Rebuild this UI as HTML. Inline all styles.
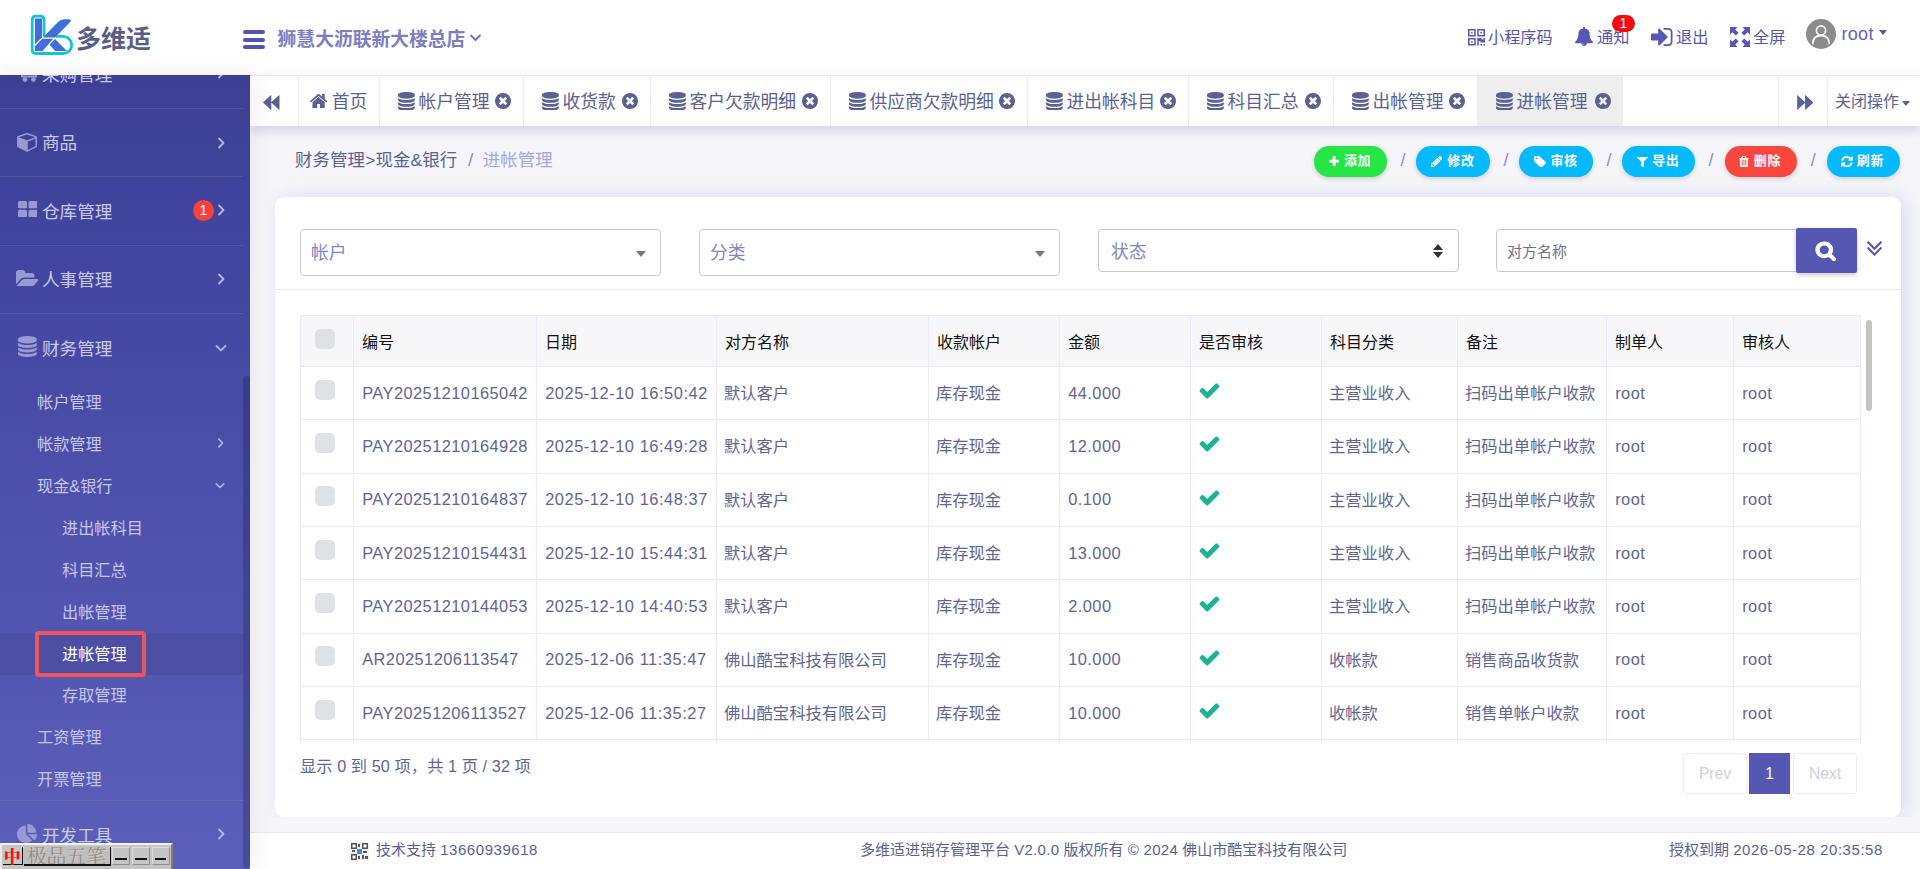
<!DOCTYPE html>
<html lang="zh-CN">
<head>
<meta charset="utf-8">
<title>多维适进销存管理平台</title>
<style>
*{box-sizing:border-box;margin:0;padding:0}
html,body{width:1920px;height:869px;overflow:hidden}
body{font-family:"Liberation Sans","Noto Sans CJK SC",sans-serif;background:#f6f6fa;color:#5b6190;position:relative;font-size:16px}
svg{display:block}
.abs{position:absolute}
/* header */
#hdr{position:absolute;left:0;top:0;width:1920px;height:75px;background:#fff;z-index:18}
#hdr .brand{position:absolute;left:76px;letter-spacing:.4px;top:20.5px;font-size:25px;font-weight:700;color:#595e88;line-height:36px;letter-spacing:0}
#hdr .store{position:absolute;left:277.6px;top:24.5px;font-size:18.8px;font-weight:700;color:#7b7ec2;line-height:30px;white-space:nowrap}
.hnav{position:absolute;top:24.5px;font-size:16.2px;color:#5656b0;line-height:24px;white-space:nowrap}
/* sidebar */
#side{position:absolute;left:0;top:75px;width:250px;height:794px;background:linear-gradient(180deg,#3c3f94 0%,#4346a0 25%,#5053ae 60%,#5c5fba 100%);z-index:25;overflow:hidden;box-shadow:0 0 24px rgba(70,70,80,.11)}
#side .sep{position:absolute;left:0;width:243px;height:1px;background:rgba(255,255,255,.09)}
#side .m1{position:absolute;left:42px;font-size:17.6px;color:#c9caea;margin-top:.8px;line-height:26px;white-space:nowrap}
#side .m2{position:absolute;left:37px;font-size:16.2px;color:#c6c7ea;line-height:22px;white-space:nowrap}
#side .m3{position:absolute;left:62px;font-size:16.2px;color:#c6c7ea;line-height:22px;white-space:nowrap}
#side .ic{position:absolute;left:17px}
#side .chev{position:absolute;left:214px}
/* tabs */
#tabs{position:absolute;left:250px;top:75px;width:1670px;height:51px;background:#fff;border-top:1px solid #e4e4f6;z-index:20;box-shadow:0 5px 11px rgba(140,140,210,.34)}
#tabs .tab{position:absolute;top:0;height:50px;border-left:1px solid #ececf4;font-size:17.8px;color:#5b6190;line-height:52px;white-space:nowrap}
#tabs .tab span{position:absolute;top:0}
/* content */
#crumb{position:absolute;left:295px;top:147px;font-size:17.4px;letter-spacing:.15px;line-height:26px;color:#5b6190;white-space:nowrap}
#crumb i{font-style:normal;color:#a3a8dc}
.btn{position:absolute;top:146.2px;height:30.4px;border-radius:15.2px;color:#fff;font-size:13px;letter-spacing:.6px;font-weight:700;line-height:30.4px;box-shadow:0 2px 5px rgba(0,0,0,.16);white-space:nowrap}
.btn span{position:absolute;top:0}
.slash{position:absolute;top:147.5px;font-size:18px;color:#8a8fc2;line-height:24px}
#card{position:absolute;left:275px;top:197px;width:1626px;height:620px;background:#fff;border-radius:9px;box-shadow:5px 0 20px rgba(145,145,220,.27)}
#cover{position:absolute;left:250px;top:817px;width:1670px;height:16px;background:#f6f6fa}
tr.x td{height:2px;line-height:0;font-size:0;padding:0;border-bottom:0}
.sel{position:absolute;background:#fff;border:1px solid #c9c9c9;border-radius:4px;font-size:17.8px;color:#8087c2}
.sel span{position:absolute;left:10px}
table{position:absolute;left:300px;top:315px;border-collapse:collapse;table-layout:fixed;width:1560px}
td,th{border:1px solid #ebe9fb;font-size:16.3px;font-weight:400;text-align:left;padding:0 0 0 7px;white-space:nowrap;overflow:hidden;color:#5f6592}
th{height:51px;background:#f7f7fa;color:#111;font-size:16px;padding-top:0;padding-bottom:1px;padding-left:8px}
td.l.d{letter-spacing:.55px}
td.l{font-size:16.4px;letter-spacing:.45px;padding-top:0;padding-left:8.2px}
td{height:53.33px;padding-bottom:2px}
td.l{padding-bottom:0}
.cb{width:20px;height:20px;border-radius:5px;background:#dee1e6;margin-left:7px;margin-top:-5px}
.pg{position:absolute;top:753px;height:41px;line-height:39px;text-align:center;font-size:15.6px;border:1px solid #ececf6;color:#cdcfde;background:#fff;border-radius:3px}
#foot{position:absolute;left:250px;top:832px;width:1670px;height:37px;background:#fff;border-top:1px solid #e9e9f6;font-size:15px;color:#5b6190;line-height:36px}
#foot span{position:absolute;top:-1px;white-space:nowrap}
#foot i{font-style:normal;letter-spacing:.55px}
</style>
</head>
<body>
<div id="hdr">
<svg class="abs" style="left:24px;top:8px" width="60" height="54" viewBox="0 0 60 54">
<path d="M20.06 27.5 L20.06 12 Q20.06 8.2 16.3 8.2 L12 8.2 Q8.2 8.2 8.2 12 L8.2 41.7 Q8.2 45.5 12 45.5 L39.15 45.5 A8.55 8.55 0 0 0 39.15 28.4 L32.5 28.4" fill="none" stroke="#12c5d2" stroke-width="2.8" stroke-linecap="round" stroke-linejoin="round"/>
<g fill="#416fd9">
<path d="M10.9 10.6 L18 10.6 L18 29.3 L10.9 36.5 Z"/>
<path d="M10.9 38.2 L18.3 30.7 L29.2 30.7 L18.6 42.9 L10.9 42.9 Z"/>
<path d="M18.9 29.5 L33.5 14.5 Q36.3 11.6 40 11.2 L45.2 11.2 Q48.2 11.6 46 14.3 L31 29.5 Z"/>
<path d="M25.5 36.6 L31 31 L42.9 42.9 L31 42.9 Z"/>
</g></svg>
<div class="brand">多维适</div>
<div class="abs" style="left:242.7px;top:30.2px;width:22px;height:4px;border-radius:2px;background:#5254b0"></div><div class="abs" style="left:242.7px;top:38px;width:22px;height:4px;border-radius:2px;background:#5254b0"></div><div class="abs" style="left:242.7px;top:45.2px;width:22px;height:4px;border-radius:2px;background:#5254b0"></div>
<div class="store">狮慧大沥联新大楼总店</div>
<svg class="abs" style="left:469.3px;top:33px" width="13" height="10" viewBox="0 0 13 10"><path d="M2 2.5 L6.5 7 L11 2.5" fill="none" stroke="#6d70b8" stroke-width="1.8" stroke-linecap="round" stroke-linejoin="round"/></svg>
<svg class="abs" style="left:1468px;top:29px;" width="17" height="16.5" viewBox="0 128 1408 1408" preserveAspectRatio="none"><path fill="#5757b6" d="M384 1152v128h-128v-128h128zm0-768v128h-128v-128h128zm768 0v128h-128v-128h128zm-1024 1023h384v-383h-384v383zm0-767h384v-384h-384v384zm768 0h384v-384h-384v384zm-256 256v640h-640v-640h640zm512 512v128h-128v-128h128zm256 0v128h-128v-128h128zm0-512v384h-384v-128h-128v384h-128v-640h384v128h128v-128h128zm-768-768v640h-640v-640h640zm768 0v640h-640v-640h640z"/></svg><div class="hnav" style="left:1488px">小程序码</div>
<svg class="abs" style="left:1575px;top:27px;" width="18" height="19" viewBox="64 0 1664 1792" preserveAspectRatio="none"><path fill="#5757b6" d="M912 1696q0-16-16-16-59 0-101.500-42.500t-42.500-101.500q0-16-16-16t-16 16q0 73 51.500 124.500t124.500 51.500q16 0 16-16zm816-288q0 52-38 90t-90 38h-448q0 106-75 181t-181 75-181-75-75-181h-448q-52 0-90-38t-38-90q50-42 91-88t85-119.500 74.500-158.500 50-206 19.500-260q0-152 117-282.500t307-158.500q-8-19-8-39 0-40 28-68t68-28 68 28 28 68q0 20-8 39 190 28 307 158.500t117 282.500q0 139 19.500 260t50 206 74.500 158.500 85 119.500 91 88z"/></svg><div class="hnav" style="left:1597px">通知</div>
<div class="abs" style="left:1612px;top:15px;width:23px;height:17px;border-radius:9px;background:#f20c12;color:#fff;font-size:14px;line-height:17px;text-align:center">1</div>
<svg class="abs" style="left:1651px;top:28px;" width="21.5" height="18" viewBox="0 256 1536 1280" preserveAspectRatio="none"><path fill="#5757b6" d="M1184 896q0 26-19 45l-544 544q-19 19-45 19t-45-19-19-45v-288h-448q-26 0-45-19t-19-45v-384q0-26 19-45t45-19h448v-288q0-26 19-45t45-19 45 19l544 544q19 19 19 45zm352-352v704q0 119-84.500 203.500t-203.500 84.500h-320q-13 0-22.500-9.500t-9.500-22.500q0-4-1-20t-.5-26.500 3-23.500 10-19.500 20.500-6.500h320q66 0 113-47t47-113v-704q0-66-47-113t-113-47h-312l-11.500-1-11.500-3-8-5.500-7-9-2-13.500q0-4-1-20t-.5-26.500 3-23.500 10-19.500 20.500-6.500h320q119 0 203.500 84.500t84.500 203.500z"/></svg><div class="hnav" style="left:1676px">退出</div>
<svg class="abs" style="left:1730px;top:27px" width="20" height="20" viewBox="0 0 20 20"><g fill="#5757b6">
<path d="M0 0 H7.6 L5.2 2.4 L8.6 5.8 L5.8 8.6 L2.4 5.2 L0 7.6 Z"/>
<path d="M20 0 V7.6 L17.6 5.2 L14.2 8.6 L11.4 5.8 L14.8 2.4 L12.4 0 Z"/>
<path d="M0 20 V12.4 L2.4 14.8 L5.8 11.4 L8.6 14.2 L5.2 17.6 L7.6 20 Z"/>
<path d="M20 20 H12.4 L14.8 17.6 L11.4 14.2 L14.2 11.4 L17.6 14.8 L20 12.4 Z"/></g></svg>
<div class="hnav" style="left:1753px">全屏</div>
<svg class="abs" style="left:1806px;top:19px" width="30" height="30" viewBox="0 0 30 30"><circle cx="15" cy="15" r="15" fill="#8b8b8b"/><circle cx="15" cy="11.5" r="4.6" fill="none" stroke="#fff" stroke-width="1.7"/><path d="M6.8 24.5 Q6.8 16.6 15 16.6 Q23.2 16.6 23.2 24.5" fill="none" stroke="#fff" stroke-width="1.7" stroke-linecap="round"/></svg>
<div class="hnav" style="left:1841.5px;top:21.5px;font-size:18px;letter-spacing:.3px;color:#6265b4">root</div>
<div class="abs" style="left:1878.5px;top:29.5px;width:0;height:0;border-left:4.5px solid transparent;border-right:4.5px solid transparent;border-top:5px solid #5757b6"></div>
</div>
<div id="side">
<div class="m1" style="top:-14px">采购管理</div>
<svg class="abs" style="left:20px;top:-4px" width="18" height="12" viewBox="0 0 18 12"><path d="M2 0 V5.6 H16 V3" fill="none" stroke="#999ad4" stroke-width="2"/><circle cx="5" cy="8.6" r="2.4" fill="#999ad4"/><circle cx="13.4" cy="8.6" r="2.4" fill="#999ad4"/></svg><div class="sep" style="top:33px"></div><div class="sep" style="top:101px"></div><div class="sep" style="top:170px"></div><div class="sep" style="top:238px"></div><div class="sep" style="top:725px"></div>
<svg class="abs" style="left:216px;top:-9px" width="10" height="14" viewBox="0 0 10 14"><path d="M3 2.5 L7.5 7 L3 11.5" fill="none" stroke="#b6b8e3" stroke-width="1.8" stroke-linecap="round" stroke-linejoin="round"/></svg><svg class="abs" style="left:16.7px;top:58px;" width="20" height="18.8" viewBox="0 128 1664 1664" preserveAspectRatio="none"><path fill="#999ad4" d="M896 1629l640-349v-636l-640 233v752zm-64-865l698-254-698-254-698 254zm832-252v768q0 35-18 65t-49 47l-704 384q-28 16-61 16t-61-16l-704-384q-31-17-49-47t-18-65v-768q0-40 23-73t61-47l704-256q22-8 44-8t44 8l704 256q38 14 61 47t23 73z"/></svg><div class="m1" style="top:54.19999999999999px">商品</div><svg class="abs" style="left:216px;top:61px" width="10" height="14" viewBox="0 0 10 14"><path d="M3 2.5 L7.5 7 L3 11.5" fill="none" stroke="#b6b8e3" stroke-width="1.8" stroke-linecap="round" stroke-linejoin="round"/></svg>
<svg class="abs" style="left:17.8px;top:126px;" width="19.6" height="16.2" viewBox="64 128 1664 1408" preserveAspectRatio="none"><path fill="#999ad4" d="M832 1024v384q0 52-38 90t-90 38h-512q-52 0-90-38t-38-90v-384q0-52 38-90t90-38h512q52 0 90 38t38 90zm0-768v384q0 52-38 90t-90 38h-512q-52 0-90-38t-38-90v-384q0-52 38-90t90-38h512q52 0 90 38t38 90zm896 768v384q0 52-38 90t-90 38h-512q-52 0-90-38t-38-90v-384q0-52 38-90t90-38h512q52 0 90 38t38 90zm0-768v384q0 52-38 90t-90 38h-512q-52 0-90-38t-38-90v-384q0-52 38-90t90-38h512q52 0 90 38t38 90z"/></svg><div class="m1" style="top:123px">仓库管理</div><svg class="abs" style="left:216px;top:128px" width="10" height="14" viewBox="0 0 10 14"><path d="M3 2.5 L7.5 7 L3 11.5" fill="none" stroke="#b6b8e3" stroke-width="1.8" stroke-linecap="round" stroke-linejoin="round"/></svg><div class="abs" style="left:193px;top:124.69999999999999px;width:21px;height:21px;border-radius:11px;background:#f5423c;color:#fff;font-size:14px;line-height:21px;text-align:center">1</div>
<svg class="abs" style="left:15.8px;top:194.60000000000002px;" width="22.5" height="16.6" viewBox="0 128 1879 1408" preserveAspectRatio="none"><path fill="#999ad4" d="M1879 952q0 31-31 66l-336 396q-43 51-120.500 86.500t-143.500 35.500h-1088q-34 0-60.500-13t-26.500-43q0-31 31-66l336-396q43-51 120.500-86.500t143.500-35.500h1088q34 0 60.500 13t26.500 43zm-343-344v160h-832q-94 0-197 47.500t-164 119.500l-337 396-5 6q0-4-.5-12.500t-.5-12.500v-960q0-92 66-158t158-66h320q92 0 158 66t66 158v32h544q92 0 158 66t66 158z"/></svg><div class="m1" style="top:191px">人事管理</div><svg class="abs" style="left:216px;top:197px" width="10" height="14" viewBox="0 0 10 14"><path d="M3 2.5 L7.5 7 L3 11.5" fill="none" stroke="#b6b8e3" stroke-width="1.8" stroke-linecap="round" stroke-linejoin="round"/></svg>
<svg class="abs" style="left:18px;top:261.3px;" width="18.8" height="21" viewBox="0 0 1536 1792" preserveAspectRatio="none"><path fill="#999ad4" d="M768 768q237 0 443-43t325-127v170q0 69-103 128t-280 93.500-385 34.500-385-34.500-280-93.500-103-128v-170q119 84 325 127t443 43zM768 1536q237 0 443-43t325-127v170q0 69-103 128t-280 93.500-385 34.500-385-34.500-280-93.500-103-128v-170q119 84 325 127t443 43zM768 1152q237 0 443-43t325-127v170q0 69-103 128t-280 93.500-385 34.500-385-34.500-280-93.500-103-128v-170q119 84 325 127t443 43zM768 0q208 0 385 34.500t280 93.500 103 128v128q0 69-103 128t-280 93.500-385 34.500-385-34.500-280-93.500-103-128v-128q0-69 103-128t280-93.500 385-34.500z"/></svg><div class="m1" style="top:260px">财务管理</div><svg class="abs" style="left:214px;top:268px" width="14" height="10" viewBox="0 0 14 10"><path d="M2.5 3 L7 7.3 L11.5 3" fill="none" stroke="#b6b8e3" stroke-width="1.8" stroke-linecap="round" stroke-linejoin="round"/></svg>
<div class="abs" style="left:0;top:558px;width:243px;height:42px;background:#4c4fa4"></div><div class="m2" style="top:316px">帐户管理</div><div class="m2" style="top:358px">帐款管理</div><div class="m2" style="top:400px">现金&amp;银行</div><div class="m2" style="top:651px">工资管理</div><div class="m2" style="top:693px">开票管理</div>
<svg class="abs" style="left:216px;top:362px" width="9" height="12" viewBox="0 0 10 14"><path d="M3 2.5 L7.5 7 L3 11.5" fill="none" stroke="#b6b8e3" stroke-width="1.8" stroke-linecap="round" stroke-linejoin="round"/></svg><svg class="abs" style="left:214px;top:406px" width="12" height="9" viewBox="0 0 14 10"><path d="M2.5 3 L7 7.3 L11.5 3" fill="none" stroke="#b6b8e3" stroke-width="1.8" stroke-linecap="round" stroke-linejoin="round"/></svg><div class="m3" style="top:442px">进出帐科目</div><div class="m3" style="top:484px">科目汇总</div><div class="m3" style="top:526px">出帐管理</div><div class="m3" style="top:568px;color:#fff">进帐管理</div><div class="m3" style="top:609px">存取管理</div>
<div class="abs" style="left:35px;top:556px;width:111px;height:46px;border:4px solid #f1555a;border-radius:4px"></div>
<svg class="abs" style="left:16.7px;top:748.8px;" width="20" height="19" viewBox="0 0 1728 1664" preserveAspectRatio="none"><path fill="#999ad4" d="M768 890l546 546q-106 108-247.500 168t-298.500 60q-209 0-385.500-103t-279.500-279.500-103-385.500 103-385.500 279.500-279.500 385.500-103v762zm187 6h773q0 157-60 298.500t-168 247.500zm709-128h-768v-768q209 0 385.500 103t279.500 279.500 103 385.500z"/></svg><div class="m1" style="top:747px">开发工具</div><svg class="abs" style="left:216px;top:752px" width="10" height="14" viewBox="0 0 10 14"><path d="M3 2.5 L7.5 7 L3 11.5" fill="none" stroke="#b6b8e3" stroke-width="1.8" stroke-linecap="round" stroke-linejoin="round"/></svg>
<div class="abs" style="left:243px;top:301px;width:6.6px;height:492px;background:rgba(0,0,20,.2);border-radius:4px"></div>
<div class="abs" style="left:0;top:768.2px;width:173.4px;height:27px;background:#c4c4c4;border-top:2px solid #f2f2f2;border-left:2px solid #e8e8e8;border-right:2px solid #7c7c7c"></div>
<div class="abs" style="left:3px;top:771.8px;width:19.6px;height:18.6px;background:#c6c6c6;border-right:1px solid #111;border-bottom:1px solid #111;color:#f0141a;font-size:17px;font-weight:900;line-height:17px;text-align:center;font-family:'Noto Serif CJK SC',serif">中</div>
<div class="abs" style="left:23.8px;top:771.8px;width:86.8px;height:18.8px;background:#bfbfbf;border-right:1px solid #111;border-bottom:2px solid #111;color:#8c8c8c;font-size:20px;line-height:17px;font-family:'Noto Serif CJK SC',serif;white-space:nowrap;overflow:hidden;padding-left:3px;letter-spacing:-.3px;text-shadow:.6px .6px 0 #d8cfc0">极品五笔</div>
<div class="abs" style="left:112px;top:771.8px;width:18.4px;height:18.2px;background:#c5c5c5;border:1px solid #dcdcdc;border-right-color:#8e8e8e;border-bottom-color:#8e8e8e"><div class="abs" style="left:2px;top:10.5px;width:11.6px;height:1.8px;background:#111"></div></div><div class="abs" style="left:132px;top:771.8px;width:18.4px;height:18.2px;background:#c5c5c5;border:1px solid #dcdcdc;border-right-color:#8e8e8e;border-bottom-color:#8e8e8e"><div class="abs" style="left:2px;top:10.5px;width:11.6px;height:1.8px;background:#111"></div></div><div class="abs" style="left:151.8px;top:771.8px;width:18.4px;height:18.2px;background:#c5c5c5;border:1px solid #dcdcdc;border-right-color:#8e8e8e;border-bottom-color:#8e8e8e"><div class="abs" style="left:2px;top:10.5px;width:11.6px;height:1.8px;background:#111"></div></div>
</div>
<div id="tabs">
<svg class="abs" style="left:13.300000000000011px;top:19px;" width="16.5" height="14.8" viewBox="186 126.56 1542 1538.88" preserveAspectRatio="none"><path fill="#5b6190" d="M1683 141q19-19 32-13t13 32v1472q0 26-13 32t-32-13l-710-710q-9-9-13-19v710q0 26-13 32t-32-13l-710-710q-19-19-19-45t19-45l710-710q19-19 32-13t13 32v710q4-10 13-19z"/></svg><div class="tab" style="left:48px;width:81px"><svg class="abs" style="left:10.6px;top:18px;" width="17.2" height="14.3" viewBox="89.8889 253 1612.22 1283" preserveAspectRatio="none"><path fill="#5b6190" d="M1472 992v480q0 26-19 45t-45 19h-384v-384h-256v384h-384q-26 0-45-19t-19-45v-480q0-1 .5-3t.5-3l575-474 575 474q1 2 1 6zm223-69l-62 74q-8 9-21 11h-3q-13 0-21-7l-692-577-692 577q-12 8-24 7-13-2-21-11l-62-74q-8-10-7-23.500t11-21.500l719-599q32-26 76-26t76 26l244 204v-195q0-14 9-23t23-9h192q14 0 23 9t9 23v408l219 182q10 8 11 21.500t-7 23.500z"/></svg><span style="left:32.8px">首页</span></div>
<div class="tab" style="left:129px;width:144px"><svg class="abs" style="left:18.2px;top:15.6px;" width="16.8" height="18.8" viewBox="0 0 1536 1792" preserveAspectRatio="none"><path fill="#5b6190" d="M768 768q237 0 443-43t325-127v170q0 69-103 128t-280 93.500-385 34.500-385-34.500-280-93.500-103-128v-170q119 84 325 127t443 43zM768 1536q237 0 443-43t325-127v170q0 69-103 128t-280 93.500-385 34.500-385-34.500-280-93.500-103-128v-170q119 84 325 127t443 43zM768 1152q237 0 443-43t325-127v170q0 69-103 128t-280 93.500-385 34.500-385-34.500-280-93.500-103-128v-170q119 84 325 127t443 43zM768 0q208 0 385 34.500t280 93.500 103 128v128q0 69-103 128t-280 93.500-385 34.500-385-34.500-280-93.500-103-128v-128q0-69 103-128t280-93.500 385-34.500z"/></svg><span style="left:38.4px">帐户管理</span><svg class="abs" style="left:114.5px;top:17.3px;" width="16" height="16" viewBox="128 128 1536 1536" preserveAspectRatio="none"><path fill="#5b6190" d="M1277 1122q0-26-19-45l-181-181 181-181q19-19 19-45 0-27-19-46l-90-90q-19-19-46-19-26 0-45 19l-181 181-181-181q-19-19-45-19-27 0-46 19l-90 90q-19 19-19 46 0 26 19 45l181 181-181 181q-19 19-19 45 0 27 19 46l90 90q19 19 46 19 26 0 45-19l181-181 181 181q19 19 45 19 27 0 46-19l90-90q19-19 19-46zm387-226q0 209-103 385.500t-279.500 279.500-385.500 103-385.500-103-279.500-279.500-103-385.500 103-385.500 279.500-279.500 385.500-103 385.500 103 279.500 279.500 103 385.500z"/></svg></div>
<div class="tab" style="left:273px;width:127px"><svg class="abs" style="left:18.2px;top:15.6px;" width="16.8" height="18.8" viewBox="0 0 1536 1792" preserveAspectRatio="none"><path fill="#5b6190" d="M768 768q237 0 443-43t325-127v170q0 69-103 128t-280 93.500-385 34.500-385-34.500-280-93.500-103-128v-170q119 84 325 127t443 43zM768 1536q237 0 443-43t325-127v170q0 69-103 128t-280 93.500-385 34.500-385-34.500-280-93.500-103-128v-170q119 84 325 127t443 43zM768 1152q237 0 443-43t325-127v170q0 69-103 128t-280 93.500-385 34.500-385-34.500-280-93.500-103-128v-170q119 84 325 127t443 43zM768 0q208 0 385 34.500t280 93.500 103 128v128q0 69-103 128t-280 93.500-385 34.500-385-34.500-280-93.500-103-128v-128q0-69 103-128t280-93.500 385-34.500z"/></svg><span style="left:38.4px">收货款</span><svg class="abs" style="left:97.5px;top:17.3px;" width="16" height="16" viewBox="128 128 1536 1536" preserveAspectRatio="none"><path fill="#5b6190" d="M1277 1122q0-26-19-45l-181-181 181-181q19-19 19-45 0-27-19-46l-90-90q-19-19-46-19-26 0-45 19l-181 181-181-181q-19-19-45-19-27 0-46 19l-90 90q-19 19-19 46 0 26 19 45l181 181-181 181q-19 19-19 45 0 27 19 46l90 90q19 19 46 19 26 0 45-19l181-181 181 181q19 19 45 19 27 0 46-19l90-90q19-19 19-46zm387-226q0 209-103 385.500t-279.500 279.500-385.500 103-385.500-103-279.500-279.500-103-385.500 103-385.500 279.500-279.500 385.500-103 385.500 103 279.500 279.500 103 385.500z"/></svg></div>
<div class="tab" style="left:400px;width:180px"><svg class="abs" style="left:18.2px;top:15.6px;" width="16.8" height="18.8" viewBox="0 0 1536 1792" preserveAspectRatio="none"><path fill="#5b6190" d="M768 768q237 0 443-43t325-127v170q0 69-103 128t-280 93.500-385 34.500-385-34.500-280-93.500-103-128v-170q119 84 325 127t443 43zM768 1536q237 0 443-43t325-127v170q0 69-103 128t-280 93.500-385 34.500-385-34.500-280-93.500-103-128v-170q119 84 325 127t443 43zM768 1152q237 0 443-43t325-127v170q0 69-103 128t-280 93.500-385 34.500-385-34.500-280-93.500-103-128v-170q119 84 325 127t443 43zM768 0q208 0 385 34.500t280 93.500 103 128v128q0 69-103 128t-280 93.500-385 34.500-385-34.500-280-93.500-103-128v-128q0-69 103-128t280-93.500 385-34.500z"/></svg><span style="left:38.4px">客户欠款明细</span><svg class="abs" style="left:150.5px;top:17.3px;" width="16" height="16" viewBox="128 128 1536 1536" preserveAspectRatio="none"><path fill="#5b6190" d="M1277 1122q0-26-19-45l-181-181 181-181q19-19 19-45 0-27-19-46l-90-90q-19-19-46-19-26 0-45 19l-181 181-181-181q-19-19-45-19-27 0-46 19l-90 90q-19 19-19 46 0 26 19 45l181 181-181 181q-19 19-19 45 0 27 19 46l90 90q19 19 46 19 26 0 45-19l181-181 181 181q19 19 45 19 27 0 46-19l90-90q19-19 19-46zm387-226q0 209-103 385.500t-279.500 279.500-385.500 103-385.500-103-279.500-279.500-103-385.500 103-385.500 279.500-279.500 385.500-103 385.500 103 279.500 279.500 103 385.500z"/></svg></div>
<div class="tab" style="left:580px;width:197px"><svg class="abs" style="left:18.2px;top:15.6px;" width="16.8" height="18.8" viewBox="0 0 1536 1792" preserveAspectRatio="none"><path fill="#5b6190" d="M768 768q237 0 443-43t325-127v170q0 69-103 128t-280 93.500-385 34.500-385-34.500-280-93.500-103-128v-170q119 84 325 127t443 43zM768 1536q237 0 443-43t325-127v170q0 69-103 128t-280 93.500-385 34.500-385-34.500-280-93.500-103-128v-170q119 84 325 127t443 43zM768 1152q237 0 443-43t325-127v170q0 69-103 128t-280 93.500-385 34.500-385-34.500-280-93.500-103-128v-170q119 84 325 127t443 43zM768 0q208 0 385 34.500t280 93.500 103 128v128q0 69-103 128t-280 93.500-385 34.500-385-34.500-280-93.500-103-128v-128q0-69 103-128t280-93.500 385-34.500z"/></svg><span style="left:38.4px">供应商欠款明细</span><svg class="abs" style="left:167.5px;top:17.3px;" width="16" height="16" viewBox="128 128 1536 1536" preserveAspectRatio="none"><path fill="#5b6190" d="M1277 1122q0-26-19-45l-181-181 181-181q19-19 19-45 0-27-19-46l-90-90q-19-19-46-19-26 0-45 19l-181 181-181-181q-19-19-45-19-27 0-46 19l-90 90q-19 19-19 46 0 26 19 45l181 181-181 181q-19 19-19 45 0 27 19 46l90 90q19 19 46 19 26 0 45-19l181-181 181 181q19 19 45 19 27 0 46-19l90-90q19-19 19-46zm387-226q0 209-103 385.500t-279.500 279.500-385.500 103-385.500-103-279.500-279.500-103-385.500 103-385.500 279.500-279.500 385.500-103 385.500 103 279.500 279.500 103 385.500z"/></svg></div>
<div class="tab" style="left:777px;width:161px"><svg class="abs" style="left:18.2px;top:15.6px;" width="16.8" height="18.8" viewBox="0 0 1536 1792" preserveAspectRatio="none"><path fill="#5b6190" d="M768 768q237 0 443-43t325-127v170q0 69-103 128t-280 93.500-385 34.500-385-34.500-280-93.500-103-128v-170q119 84 325 127t443 43zM768 1536q237 0 443-43t325-127v170q0 69-103 128t-280 93.500-385 34.500-385-34.500-280-93.500-103-128v-170q119 84 325 127t443 43zM768 1152q237 0 443-43t325-127v170q0 69-103 128t-280 93.500-385 34.500-385-34.500-280-93.500-103-128v-170q119 84 325 127t443 43zM768 0q208 0 385 34.500t280 93.500 103 128v128q0 69-103 128t-280 93.500-385 34.500-385-34.500-280-93.500-103-128v-128q0-69 103-128t280-93.500 385-34.500z"/></svg><span style="left:38.4px">进出帐科目</span><svg class="abs" style="left:131.5px;top:17.3px;" width="16" height="16" viewBox="128 128 1536 1536" preserveAspectRatio="none"><path fill="#5b6190" d="M1277 1122q0-26-19-45l-181-181 181-181q19-19 19-45 0-27-19-46l-90-90q-19-19-46-19-26 0-45 19l-181 181-181-181q-19-19-45-19-27 0-46 19l-90 90q-19 19-19 46 0 26 19 45l181 181-181 181q-19 19-19 45 0 27 19 46l90 90q19 19 46 19 26 0 45-19l181-181 181 181q19 19 45 19 27 0 46-19l90-90q19-19 19-46zm387-226q0 209-103 385.500t-279.500 279.500-385.500 103-385.500-103-279.500-279.500-103-385.500 103-385.500 279.500-279.500 385.500-103 385.500 103 279.500 279.500 103 385.500z"/></svg></div>
<div class="tab" style="left:938px;width:145px"><svg class="abs" style="left:18.2px;top:15.6px;" width="16.8" height="18.8" viewBox="0 0 1536 1792" preserveAspectRatio="none"><path fill="#5b6190" d="M768 768q237 0 443-43t325-127v170q0 69-103 128t-280 93.500-385 34.500-385-34.500-280-93.500-103-128v-170q119 84 325 127t443 43zM768 1536q237 0 443-43t325-127v170q0 69-103 128t-280 93.500-385 34.500-385-34.500-280-93.500-103-128v-170q119 84 325 127t443 43zM768 1152q237 0 443-43t325-127v170q0 69-103 128t-280 93.500-385 34.500-385-34.500-280-93.500-103-128v-170q119 84 325 127t443 43zM768 0q208 0 385 34.500t280 93.500 103 128v128q0 69-103 128t-280 93.500-385 34.500-385-34.500-280-93.500-103-128v-128q0-69 103-128t280-93.500 385-34.500z"/></svg><span style="left:38.4px">科目汇总</span><svg class="abs" style="left:115.5px;top:17.3px;" width="16" height="16" viewBox="128 128 1536 1536" preserveAspectRatio="none"><path fill="#5b6190" d="M1277 1122q0-26-19-45l-181-181 181-181q19-19 19-45 0-27-19-46l-90-90q-19-19-46-19-26 0-45 19l-181 181-181-181q-19-19-45-19-27 0-46 19l-90 90q-19 19-19 46 0 26 19 45l181 181-181 181q-19 19-19 45 0 27 19 46l90 90q19 19 46 19 26 0 45-19l181-181 181 181q19 19 45 19 27 0 46-19l90-90q19-19 19-46zm387-226q0 209-103 385.500t-279.500 279.500-385.500 103-385.500-103-279.500-279.500-103-385.500 103-385.500 279.500-279.500 385.500-103 385.500 103 279.500 279.500 103 385.500z"/></svg></div>
<div class="tab" style="left:1083px;width:144px"><svg class="abs" style="left:18.2px;top:15.6px;" width="16.8" height="18.8" viewBox="0 0 1536 1792" preserveAspectRatio="none"><path fill="#5b6190" d="M768 768q237 0 443-43t325-127v170q0 69-103 128t-280 93.500-385 34.500-385-34.500-280-93.500-103-128v-170q119 84 325 127t443 43zM768 1536q237 0 443-43t325-127v170q0 69-103 128t-280 93.500-385 34.500-385-34.500-280-93.500-103-128v-170q119 84 325 127t443 43zM768 1152q237 0 443-43t325-127v170q0 69-103 128t-280 93.500-385 34.500-385-34.500-280-93.500-103-128v-170q119 84 325 127t443 43zM768 0q208 0 385 34.500t280 93.500 103 128v128q0 69-103 128t-280 93.500-385 34.500-385-34.500-280-93.500-103-128v-128q0-69 103-128t280-93.500 385-34.500z"/></svg><span style="left:38.4px">出帐管理</span><svg class="abs" style="left:114.5px;top:17.3px;" width="16" height="16" viewBox="128 128 1536 1536" preserveAspectRatio="none"><path fill="#5b6190" d="M1277 1122q0-26-19-45l-181-181 181-181q19-19 19-45 0-27-19-46l-90-90q-19-19-46-19-26 0-45 19l-181 181-181-181q-19-19-45-19-27 0-46 19l-90 90q-19 19-19 46 0 26 19 45l181 181-181 181q-19 19-19 45 0 27 19 46l90 90q19 19 46 19 26 0 45-19l181-181 181 181q19 19 45 19 27 0 46-19l90-90q19-19 19-46zm387-226q0 209-103 385.500t-279.500 279.500-385.500 103-385.500-103-279.500-279.500-103-385.500 103-385.500 279.500-279.500 385.500-103 385.500 103 279.500 279.500 103 385.500z"/></svg></div>
<div class="tab" style="left:1227px;width:146px;background:#eeeeee"><svg class="abs" style="left:18.2px;top:15.6px;" width="16.8" height="18.8" viewBox="0 0 1536 1792" preserveAspectRatio="none"><path fill="#5b6190" d="M768 768q237 0 443-43t325-127v170q0 69-103 128t-280 93.500-385 34.500-385-34.500-280-93.500-103-128v-170q119 84 325 127t443 43zM768 1536q237 0 443-43t325-127v170q0 69-103 128t-280 93.500-385 34.500-385-34.500-280-93.500-103-128v-170q119 84 325 127t443 43zM768 1152q237 0 443-43t325-127v170q0 69-103 128t-280 93.500-385 34.500-385-34.500-280-93.500-103-128v-170q119 84 325 127t443 43zM768 0q208 0 385 34.500t280 93.500 103 128v128q0 69-103 128t-280 93.500-385 34.500-385-34.500-280-93.500-103-128v-128q0-69 103-128t280-93.500 385-34.500z"/></svg><span style="left:38.4px">进帐管理</span><svg class="abs" style="left:116.5px;top:17.3px;" width="16" height="16" viewBox="128 128 1536 1536" preserveAspectRatio="none"><path fill="#5b6190" d="M1277 1122q0-26-19-45l-181-181 181-181q19-19 19-45 0-27-19-46l-90-90q-19-19-46-19-26 0-45 19l-181 181-181-181q-19-19-45-19-27 0-46 19l-90 90q-19 19-19 46 0 26 19 45l181 181-181 181q-19 19-19 45 0 27 19 46l90 90q19 19 46 19 26 0 45-19l181-181 181 181q19 19 45 19 27 0 46-19l90-90q19-19 19-46zm387-226q0 209-103 385.500t-279.500 279.500-385.500 103-385.500-103-279.500-279.500-103-385.500 103-385.500 279.500-279.500 385.500-103 385.500 103 279.500 279.500 103 385.500z"/></svg></div>
<div class="tab" style="left:1373px;width:155px;border-left:0"></div><div class="tab" style="left:1528px;width:49px"><svg class="abs" style="left:18.3px;top:19.2px;transform:scaleX(-1)" width="16.2" height="15" viewBox="186 126.56 1542 1538.88" preserveAspectRatio="none"><path fill="#5b6190" d="M1683 141q19-19 32-13t13 32v1472q0 26-13 32t-32-13l-710-710q-9-9-13-19v710q0 26-13 32t-32-13l-710-710q-19-19-19-45t19-45l710-710q19-19 32-13t13 32v710q4-10 13-19z"/></svg></div><div class="tab" style="left:1577px;width:93px;font-size:16px"><span style="left:7px">关闭操作</span><div class="abs" style="left:74px;top:24.5px;width:0;height:0;border-left:4.5px solid transparent;border-right:4.5px solid transparent;border-top:5px solid #5b6190"></div></div>
</div>
<div id="crumb">财务管理&gt;现金&amp;银行<span style="margin:0 9.5px 0 10.5px;color:#8a8fc2;font-size:19px;letter-spacing:0">/</span><i>进帐管理</i></div>
<div class="btn" style="left:1314.2px;width:72.8px;background:#27e544"><svg class="abs" style="left:15.0px;top:9.6px;" width="10.3" height="10.3" viewBox="192 128 1408 1408" preserveAspectRatio="none"><path fill="#fff" d="M1600 736v192q0 40-28 68t-68 28h-416v416q0 40-28 68t-68 28h-192q-40 0-68-28t-28-68v-416h-416q-40 0-68-28t-28-68v-192q0-40 28-68t68-28h416v-416q0-40 28-68t68-28h192q40 0 68 28t28 68v416h416q40 0 68 28t28 68z"/></svg><span style="left:29.8px">添加</span></div><div class="slash" style="left:1400.6px">/</div>
<div class="btn" style="left:1416.2px;width:73.6px;background:#04b9fd"><svg class="abs" style="left:14.6px;top:9.8px;" width="11.5" height="11" viewBox="128 149 1515 1515" preserveAspectRatio="none"><path fill="#fff" d="M491 1536l91-91-235-235-91 91v107h128v128h107zm523-928q0-22-22-22-10 0-17 7l-542 542q-7 7-7 17 0 22 22 22 10 0 17-7l542-542q7-7 7-17zm-54-192l416 416-832 832h-416v-416zm683 96q0 53-37 90l-166 166-416-416 166-165q36-38 90-38 53 0 91 38l235 234q37 39 37 91z"/></svg><span style="left:31.1px">修改</span></div><div class="slash" style="left:1503.4px">/</div>
<div class="btn" style="left:1519.2px;width:73.7px;background:#04b9fd"><svg class="abs" style="left:14.6px;top:9.6px;" width="12" height="11.4" viewBox="128 128 1515 1515" preserveAspectRatio="none"><path fill="#fff" d="M576 448q0-53-37.500-90.500t-90.500-37.500-90.500 37.500-37.500 90.500 37.500 90.500 90.500 37.500 90.500-37.500 37.500-90.500zm1067 576q0 53-37 90l-491 492q-39 37-91 37-53 0-90-37l-715-716q-38-37-64.500-101t-26.500-117v-416q0-52 38-90t90-38h416q53 0 117 26.500t102 64.500l715 714q37 39 37 91z"/></svg><span style="left:31.2px">审核</span></div><div class="slash" style="left:1606.5px">/</div>
<div class="btn" style="left:1622.2px;width:72.7px;background:#04b9fd"><svg class="abs" style="left:14.6px;top:10.4px;" width="10.8" height="10.6" viewBox="190.979 256 1410.04 1408" preserveAspectRatio="none"><path fill="#fff" d="M1595 295q17 41-14 70l-493 493v742q0 42-39 59-13 5-25 5-27 0-45-19l-256-256q-19-19-19-45v-486l-493-493q-31-29-14-70 17-39 59-39h1280q42 0 59 39z"/></svg><span style="left:30.0px">导出</span></div><div class="slash" style="left:1708.5px">/</div>
<div class="btn" style="left:1725.2px;width:71.9px;background:#fa463e"><svg class="abs" style="left:14.1px;top:9.6px;" width="9.9" height="11.3" viewBox="192 128 1408 1536" preserveAspectRatio="none"><path fill="#fff" d="M704 1376v-704q0-14-9-23t-23-9h-64q-14 0-23 9t-9 23v704q0 14 9 23t23 9h64q14 0 23-9t9-23zm256 0v-704q0-14-9-23t-23-9h-64q-14 0-23 9t-9 23v704q0 14 9 23t23 9h64q14 0 23-9t9-23zm256 0v-704q0-14-9-23t-23-9h-64q-14 0-23 9t-9 23v704q0 14 9 23t23 9h64q14 0 23-9t9-23zm-544-992h448l-48-117q-7-9-17-11h-317q-10 2-17 11zm928 32v64q0 14-9 23t-23 9h-96v948q0 83-47 143.500t-113 60.500h-832q-66 0-113-58.500t-47-141.500v-952h-96q-14 0-23-9t-9-23v-64q0-14 9-23t23-9h309l70-167q15-37 54-63t79-26h320q40 0 79 26t54 63l70 167h309q14 0 23 9t9 23z"/></svg><span style="left:28.6px">删除</span></div><div class="slash" style="left:1810.7px">/</div>
<div class="btn" style="left:1827px;width:73.0px;background:#04b9fd"><svg class="abs" style="left:14px;top:9.6px;" width="11.8" height="11.3" viewBox="128 128 1536 1536" preserveAspectRatio="none"><path fill="#fff" d="M1639 1056q0 5-1 7-64 268-268 434.500t-478 166.500q-146 0-282.500-55t-243.500-157l-129 129q-19 19-45 19t-45-19-19-45v-448q0-26 19-45t45-19h448q26 0 45 19t19 45-19 45l-137 137q71 66 161 102t187 36q134 0 250-65t186-179q11-17 53-117 8-23 30-23h192q13 0 22.500 9.500t9.500 22.500zm25-800v448q0 26-19 45t-45 19h-448q-26 0-45-19t-19-45 19-45l138-138q-148-137-349-137-134 0-250 65t-186 179q-11 17-53 117-8 23-30 23h-199q-13 0-22.500-9.500t-9.500-22.500v-7q65-268 270-434.500t480-166.500q146 0 284 55.500t245 156.500l130-129q19-19 45-19t45 19 19 45z"/></svg><span style="left:29.8px">刷新</span></div>
<div id="card"></div><div id="cover"></div>
<div class="abs" style="left:275px;top:289px;width:1626px;height:1px;background:#ecebf8"></div>
<div class="sel" style="left:300px;top:229px;width:361px;height:47px"><span style="top:7.5px">帐户</span><div class="abs" style="left:335px;top:21px;width:0;height:0;border-left:5px solid transparent;border-right:5px solid transparent;border-top:6px solid #777"></div></div>
<div class="sel" style="left:699px;top:229px;width:361px;height:47px"><span style="top:7.5px">分类</span><div class="abs" style="left:335px;top:21px;width:0;height:0;border-left:5px solid transparent;border-right:5px solid transparent;border-top:6px solid #777"></div></div>
<div class="sel" style="left:1098px;top:229px;width:361px;height:43px"><span style="top:7px;left:12px">状态</span><div class="abs" style="left:334px;top:14px;width:0;height:0;border-left:5px solid transparent;border-right:5px solid transparent;border-bottom:6px solid #333"></div><div class="abs" style="left:334px;top:22px;width:0;height:0;border-left:5px solid transparent;border-right:5px solid transparent;border-top:6px solid #333"></div></div>
<div class="sel" style="left:1496px;top:229px;width:303px;height:43px;border-radius:4px 0 0 4px"><span style="top:9.5px;left:10px;font-size:15px;color:#6f7186">对方名称</span></div>
<div class="abs" style="left:1796px;top:228px;width:61px;height:45px;background:#5557b3;border-radius:2px;box-shadow:0 2px 5px rgba(0,0,0,.2)"><svg class="abs" style="overflow:visible;left:20.2px;top:14px;" width="19.5" height="18.5" viewBox="64 128 1664 1664" preserveAspectRatio="none"><path stroke="#fff" stroke-width="110" stroke-linejoin="round" fill="#fff" d="M1216 832q0-185-131.500-316.500t-316.500-131.500-316.500 131.500-131.500 316.500 131.500 316.500 316.500 131.500 316.500-131.500 131.500-316.500zm512 832q0 52-38 90t-90 38q-54 0-90-38l-343-342q-179 124-399 124-143 0-273.500-55.500t-225-150-150-225-55.500-273.500 55.500-273.500 150-225 225-150 273.500-55.500 273.500 55.500 225 150 150 225 55.500 273.500q0 220-124 399l343 343q37 37 37 90z"/></svg></div>
<svg class="abs" style="left:1867.3px;top:240.6px;" width="15" height="15" viewBox="397 397 998 966" preserveAspectRatio="none"><path fill="#5557b3" d="M1395 864q0 13-10 23l-466 466q-10 10-23 10t-23-10l-466-466q-10-10-10-23t10-23l50-50q10-10 23-10t23 10l393 393 393-393q10-10 23-10t23 10l50 50q10 10 10 23zm0-384q0 13-10 23l-466 466q-10 10-23 10t-23-10l-466-466q-10-10-10-23t10-23l50-50q10-10 23-10t23 10l393 393 393-393q10-10 23-10t23 10l50 50q10 10 10 23z"/></svg><table><colgroup><col style="width:53px"><col style="width:183px"><col style="width:180px"><col style="width:212px"><col style="width:131px"><col style="width:131px"><col style="width:131px"><col style="width:136px"><col style="width:149px"><col style="width:127px"><col style="width:127px"></colgroup>
<tr><th><div class="cb" style="margin-top:-4px;margin-left:6px"></div></th><th>编号</th><th>日期</th><th>对方名称</th><th>收款帐户</th><th>金额</th><th>是否审核</th><th>科目分类</th><th>备注</th><th>制单人</th><th>审核人</th></tr>
<tr><td><div class="cb"></div></td><td class="l">PAY20251210165042</td><td class="l d">2025-12-10 16:50:42</td><td>默认客户</td><td>库存现金</td><td class="l">44.000</td><td><svg width="23" height="23" viewBox="0 0 1792 1792" style="margin-top:-3px"><path fill="#1bb394" d="M1671 566q0 40-28 68l-724 724-136 136q-28 28-68 28t-68-28l-136-136-362-362q-28-28-28-68t28-68l136-136q28-28 68-28t68 28l294 295 656-657q28-28 68-28t68 28l136 136q28 28 28 68z"/></svg></td><td>主营业收入</td><td>扫码出单帐户收款</td><td class="l">root</td><td class="l">root</td></tr>
<tr><td><div class="cb"></div></td><td class="l">PAY20251210164928</td><td class="l d">2025-12-10 16:49:28</td><td>默认客户</td><td>库存现金</td><td class="l">12.000</td><td><svg width="23" height="23" viewBox="0 0 1792 1792" style="margin-top:-3px"><path fill="#1bb394" d="M1671 566q0 40-28 68l-724 724-136 136q-28 28-68 28t-68-28l-136-136-362-362q-28-28-28-68t28-68l136-136q28-28 68-28t68 28l294 295 656-657q28-28 68-28t68 28l136 136q28 28 28 68z"/></svg></td><td>主营业收入</td><td>扫码出单帐户收款</td><td class="l">root</td><td class="l">root</td></tr>
<tr><td><div class="cb"></div></td><td class="l">PAY20251210164837</td><td class="l d">2025-12-10 16:48:37</td><td>默认客户</td><td>库存现金</td><td class="l">0.100</td><td><svg width="23" height="23" viewBox="0 0 1792 1792" style="margin-top:-3px"><path fill="#1bb394" d="M1671 566q0 40-28 68l-724 724-136 136q-28 28-68 28t-68-28l-136-136-362-362q-28-28-28-68t28-68l136-136q28-28 68-28t68 28l294 295 656-657q28-28 68-28t68 28l136 136q28 28 28 68z"/></svg></td><td>主营业收入</td><td>扫码出单帐户收款</td><td class="l">root</td><td class="l">root</td></tr>
<tr><td><div class="cb"></div></td><td class="l">PAY20251210154431</td><td class="l d">2025-12-10 15:44:31</td><td>默认客户</td><td>库存现金</td><td class="l">13.000</td><td><svg width="23" height="23" viewBox="0 0 1792 1792" style="margin-top:-3px"><path fill="#1bb394" d="M1671 566q0 40-28 68l-724 724-136 136q-28 28-68 28t-68-28l-136-136-362-362q-28-28-28-68t28-68l136-136q28-28 68-28t68 28l294 295 656-657q28-28 68-28t68 28l136 136q28 28 28 68z"/></svg></td><td>主营业收入</td><td>扫码出单帐户收款</td><td class="l">root</td><td class="l">root</td></tr>
<tr><td><div class="cb"></div></td><td class="l">PAY20251210144053</td><td class="l d">2025-12-10 14:40:53</td><td>默认客户</td><td>库存现金</td><td class="l">2.000</td><td><svg width="23" height="23" viewBox="0 0 1792 1792" style="margin-top:-3px"><path fill="#1bb394" d="M1671 566q0 40-28 68l-724 724-136 136q-28 28-68 28t-68-28l-136-136-362-362q-28-28-28-68t28-68l136-136q28-28 68-28t68 28l294 295 656-657q28-28 68-28t68 28l136 136q28 28 28 68z"/></svg></td><td>主营业收入</td><td>扫码出单帐户收款</td><td class="l">root</td><td class="l">root</td></tr>
<tr><td><div class="cb"></div></td><td class="l">AR20251206113547</td><td class="l d">2025-12-06 11:35:47</td><td>佛山酷宝科技有限公司</td><td>库存现金</td><td class="l">10.000</td><td><svg width="23" height="23" viewBox="0 0 1792 1792" style="margin-top:-3px"><path fill="#1bb394" d="M1671 566q0 40-28 68l-724 724-136 136q-28 28-68 28t-68-28l-136-136-362-362q-28-28-28-68t28-68l136-136q28-28 68-28t68 28l294 295 656-657q28-28 68-28t68 28l136 136q28 28 28 68z"/></svg></td><td>收帐款</td><td>销售商品收货款</td><td class="l">root</td><td class="l">root</td></tr>
<tr><td><div class="cb"></div></td><td class="l">PAY20251206113527</td><td class="l d">2025-12-06 11:35:27</td><td>佛山酷宝科技有限公司</td><td>库存现金</td><td class="l">10.000</td><td><svg width="23" height="23" viewBox="0 0 1792 1792" style="margin-top:-3px"><path fill="#1bb394" d="M1671 566q0 40-28 68l-724 724-136 136q-28 28-68 28t-68-28l-136-136-362-362q-28-28-28-68t28-68l136-136q28-28 68-28t68 28l294 295 656-657q28-28 68-28t68 28l136 136q28 28 28 68z"/></svg></td><td>收帐款</td><td>销售单帐户收款</td><td class="l">root</td><td class="l">root</td></tr>
<tr class="x"><td></td><td></td><td></td><td></td><td></td><td></td><td></td><td></td><td></td><td></td><td></td></tr>
</table>
<div class="abs" style="left:1866px;top:320px;width:6px;height:91px;border-radius:3px;background:#c4c4c4"></div>
<div class="abs" style="left:300px;top:754px;font-size:16.2px;letter-spacing:.1px;line-height:24px;color:#5f6592;white-space:nowrap">显示 0 到 50 项，共 1 页 / 32 项</div>
<div class="pg" style="left:1683px;width:64px">Prev</div><div class="pg" style="left:1749px;width:41px;background:#5557b3;border-color:#5557b3;color:#fff;border-radius:0">1</div><div class="pg" style="left:1793px;width:64px">Next</div>
<div id="foot">
<svg class="abs" style="left:100px;top:9px" width="19" height="19" viewBox="0 0 19 19"><rect width="19" height="19" rx="2" fill="#f1f1f1"/><g fill="#555"><rect x="1" y="1" width="6" height="6"/><rect x="12" y="1" width="6" height="6"/><rect x="1" y="12" width="6" height="6"/><rect x="8" y="2" width="2" height="3"/><rect x="9" y="7" width="3" height="2"/><rect x="2" y="8" width="3" height="2"/><rect x="13" y="9" width="4" height="2"/><rect x="12" y="13" width="2" height="4"/><rect x="15" y="14" width="3" height="3"/><rect x="8" y="14" width="2" height="3"/></g><g fill="#fff"><rect x="2.5" y="2.5" width="3" height="3"/><rect x="13.5" y="2.5" width="3" height="3"/><rect x="2.5" y="13.5" width="3" height="3"/></g><rect x="7" y="7" width="5" height="5" fill="#3d8be0"/></svg>
<span style="left:126px">技术支持 <i>13660939618</i></span>
<span style="left:610px">多维适进销存管理平台 <i style="letter-spacing:.3px">V2.0.0</i> 版权所有 <i style="letter-spacing:.3px">© 2024</i> 佛山市酷宝科技有限公司</span>
<span style="left:1419px">授权到期 <i>2026-05-28 20:35:58</i></span>
</div>
</body>
</html>
